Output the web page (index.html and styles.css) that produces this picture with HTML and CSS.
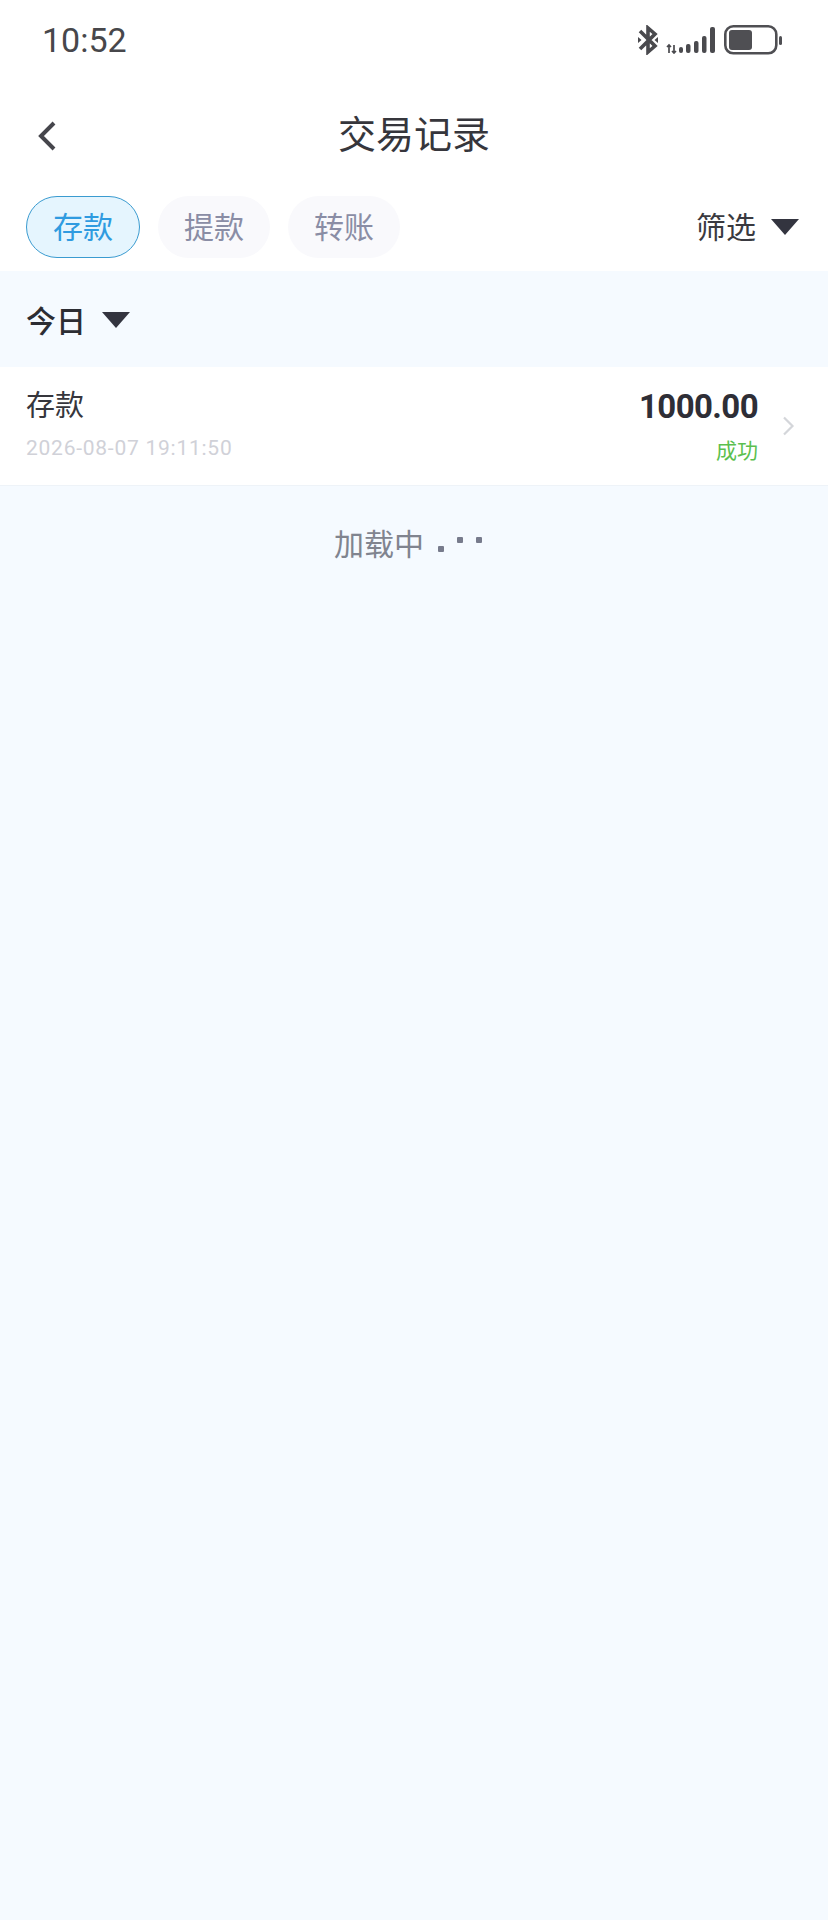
FILE: index.html
```html
<!DOCTYPE html>
<html lang="zh-CN">
<head>
    <meta charset="UTF-8">
    <meta name="viewport" content="width=device-width, initial-scale=1.0">
    <title>交易记录</title>
    <link rel="stylesheet" href="styles.css">
</head>
<body>
    <div class="page">
        <header class="top">
            <!-- Status bar -->
            <div class="status-bar">
                <span class="clock">10:52</span>
                <div class="status-icons">
                    <svg class="icon-bt" width="20" height="30" viewBox="0 0 20 30">
                        <path d="M2 6 L17 21 L10 27 L10 3 L17 9 L2 24" fill="none" stroke="#4a4a4e" stroke-width="3.6"/>
                        <path d="M0 12 L3.5 15 L0 18 Z M20 12 L16.5 15 L20 18 Z" fill="#4a4a4e"/>
                    </svg>
                    <svg class="icon-signal" width="50" height="28" viewBox="0 0 50 28">
                        <path d="M3 19 V27 M1 21 L3 19 L5 21 M8 19 V27 M6 25 L8 27 L10 25" fill="none" stroke="#4a4a4e" stroke-width="1.7"/>
                        <rect x="13" y="21" width="4" height="6" rx="2" fill="#4a4a4e"/>
                        <rect x="20" y="18" width="4.5" height="9" rx="2" fill="#4a4a4e"/>
                        <rect x="28" y="15" width="4.5" height="12" rx="2" fill="#4a4a4e"/>
                        <rect x="36" y="10" width="4.5" height="17" rx="2" fill="#4a4a4e"/>
                        <rect x="44" y="1" width="5" height="26" rx="2" fill="#4a4a4e"/>
                    </svg>
                    <svg class="icon-battery" width="59" height="30" viewBox="0 0 59 30">
                        <rect x="1.3" y="1.3" width="51" height="27" rx="8" fill="none" stroke="#4f4f53" stroke-width="2.6"/>
                        <rect x="5" y="5" width="23" height="20" rx="3" fill="#4f4f53"/>
                        <rect x="55" y="11" width="3" height="9" rx="1.5" fill="#4f4f53"/>
                    </svg>
                </div>
            </div>

            <!-- Title bar -->
            <div class="nav-bar">
                <svg class="back" width="20" height="32" viewBox="0 0 20 32">
                    <path d="M17 3 L4 16 L17 29" fill="none" stroke="#46464c" stroke-width="4"/>
                </svg>
                <h1>交易记录</h1>
            </div>

            <!-- Type tabs -->
            <div class="tabs">
                <span class="tab active">存款</span>
                <span class="tab">提款</span>
                <span class="tab">转账</span>
                <div class="filter">
                    <span>筛选</span>
                    <i class="arrow"></i>
                </div>
            </div>
        </header>

        <div class="day-row">
            <span>今日</span>
            <i class="arrow"></i>
        </div>

        <div class="record">
            <div class="record-left">
                <div class="record-name">存款</div>
                <div class="record-date">2026-08-07 19:11:50</div>
            </div>
            <div class="record-right">
                <div class="record-amount">1000.00</div>
                <div class="record-state">成功</div>
            </div>
            <svg class="chevron" width="13" height="20" viewBox="0 0 13 20">
                <path d="M2 1.5 L10.5 10 L2 18.5" fill="none" stroke="#d4d6da" stroke-width="2.2"/>
            </svg>
        </div>

        <div class="loading">
            <span>加载中</span>
            <div class="dots">
                <i class="dot dot-low"></i>
                <i class="dot"></i>
                <i class="dot"></i>
            </div>
        </div>
    </div>
</body>
</html>
```

FILE: styles.css
```css
* {
    box-sizing: border-box;
    margin: 0;
    padding: 0;
}

body {
    background-color: #f5faff;
    color: #2f2f36;
    font-family: "Noto Sans CJK SC", "Noto Sans", sans-serif;
}

.page {
    width: 828px;
    min-height: 1920px;
}

.top {
    background-color: #fff;
    height: 271px;
}

.status-bar {
    display: flex;
    justify-content: space-between;
    align-items: center;
    height: 80px;
    padding: 0 45px 0 42px;
}

.clock {
    font-family: Roboto, sans-serif;
    font-size: 34px;
    color: #47474b;
}

.status-icons {
    display: flex;
    align-items: center;
    gap: 8px;
}

.nav-bar {
    position: relative;
    display: flex;
    justify-content: center;
    align-items: center;
    height: 110px;
}

.nav-bar h1 {
    margin-top: -6px;
    font-size: 38px;
    font-weight: 400;
    line-height: 50px;
    color: #36363c;
}

.back {
    position: absolute;
    left: 37px;
    top: 40px;
}

.tabs {
    display: flex;
    align-items: center;
    gap: 18px;
    padding: 6px 29px 0 26px;
}

.tab {
    width: 112px;
    height: 62px;
    border-radius: 31px;
    background-color: #f9f9fc;
    color: #8a8da5;
    font-size: 30px;
    line-height: 59px;
    text-align: center;
}

.tab.active {
    width: 114px;
    border: 1.5px solid #3a9bd0;
    background-color: #e5f5fe;
    color: #2f9be0;
    line-height: 56px;
}

.filter {
    display: flex;
    align-items: center;
    gap: 15px;
    margin-left: auto;
    margin-top: -4px;
    font-size: 30px;
    color: #3a3a40;
}

/* Small dropdown triangle */
.arrow {
    display: block;
    width: 0;
    height: 0;
    margin-top: 3px;
    border-left: 14px solid transparent;
    border-right: 14px solid transparent;
    border-top: 16px solid #33343f;
}

.day-row {
    display: flex;
    align-items: center;
    gap: 16px;
    height: 96px;
    padding-left: 26px;
    padding-bottom: 1px;
    font-size: 30px;
    font-weight: 500;
    color: #2c2d33;
}

.record {
    display: flex;
    align-items: center;
    height: 119px;
    padding: 0 33px 0 26px;
    background-color: #fff;
    border-bottom: 1px solid #eef3f8;
}

.record-left {
    flex: 1;
}

.record-name {
    margin-top: -7px;
    font-size: 29px;
    line-height: 40px;
    color: #36363c;
}

.record-date {
    margin-top: 11px;
    font-family: Roboto, sans-serif;
    font-size: 21px;
    letter-spacing: 0.75px;
    line-height: 28px;
    color: #d0d1d8;
}

.record-right {
    margin-right: -2px;
    text-align: right;
}

.record-amount {
    margin-top: -2px;
    font-family: Roboto, sans-serif;
    font-size: 33px;
    font-weight: 700;
    letter-spacing: -0.6px;
    line-height: 40px;
    color: #2e2e36;
}

.record-state {
    margin-top: 8px;
    font-size: 21px;
    line-height: 28px;
    color: #5bbf4e;
}

.chevron {
    margin-left: 26px;
}

.loading {
    display: flex;
    justify-content: center;
    align-items: center;
    gap: 14px;
    height: 94px;
    padding-top: 18px;
    padding-right: 12px;
    font-size: 30px;
    color: #80848f;
}

.dots {
    display: flex;
    gap: 13px;
    align-items: flex-start;
    margin-top: 4px;
}

.dot {
    display: block;
    width: 6px;
    height: 6px;
    border-radius: 1px;
    background-color: #777b8c;
}

.dot-low {
    margin-top: 9px;
}
```
